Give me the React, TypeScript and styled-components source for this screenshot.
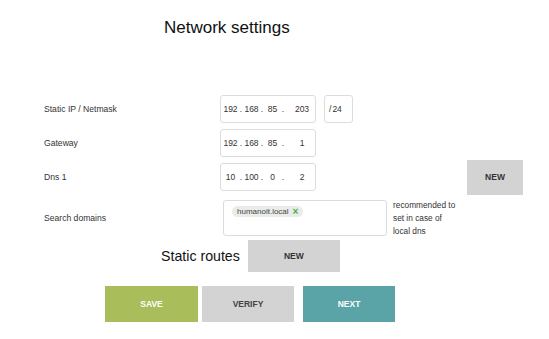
import React from 'react';
import styled, { createGlobalStyle } from 'styled-components';

const GlobalStyle = createGlobalStyle`
  body {
    margin: 0;
    background: #fff;
    font-family: "Liberation Sans", Arial, sans-serif;
    color: #333;
  }
`;

const Page = styled.div`
  width: 549px;
  padding-top: 18px;
`;

const Title = styled.h1`
  margin: 0;
  padding-left: 164px;
  font-size: 17px;
  line-height: 20px;
  font-weight: normal;
  color: #111;
`;

const Form = styled.div`
  margin-top: 57px;
  display: flex;
  flex-direction: column;
  gap: 6px;
`;

const Row = styled.div<{ $height?: number; $gap?: number }>`
  display: flex;
  align-items: center;
  padding-left: 44px;
  padding-right: 26px;
  height: ${({ $height }) => $height ?? 28}px;
  margin-top: ${({ $gap }) => $gap ?? 0}px;
`;

const Label = styled.span`
  width: 176px;
  flex-shrink: 0;
  font-size: 8.6px;
  color: #333;
`;

const Box = styled.div<{ $width: number }>`
  box-sizing: border-box;
  width: ${({ $width }) => $width}px;
  height: 100%;
  border: 1px solid #dcdcdc;
  border-radius: 3px;
  display: flex;
  align-items: center;
  font-size: 8.5px;
  color: #333;
`;

const IpBox = styled(Box)`
  padding-left: 2px;
`;

const Octet = styled.span<{ $last?: boolean }>`
  width: ${({ $last }) => ($last ? 20 : 15)}px;
  margin-left: ${({ $last }) => ($last ? 6 : 0)}px;
  text-align: center;
`;

const Dot = styled.span`
  width: 6px;
  text-align: center;
`;

const MaskBox = styled(Box)`
  margin-left: 8px;
  padding-left: 4px;
`;

const Slash = styled.span`
  margin-right: 1px;
`;

const SearchBox = styled(Box)`
  margin-left: 3px;
  align-items: flex-start;
  padding: 5px 8px;
`;

const Chip = styled.span`
  display: inline-flex;
  align-items: center;
  gap: 4px;
  height: 11px;
  padding: 0 5px;
  border-radius: 6px;
  background: #eaece9;
  font-size: 8px;
  color: #444;
`;

const ChipClose = styled.span`
  color: #4cae4c;
  font-size: 10px;
  font-weight: bold;
  line-height: 1;
`;

const Note = styled.span`
  align-self: flex-start;
  margin-top: -1.5px;
  margin-left: 6px;
  width: 68px;
  font-size: 8.3px;
  line-height: 13px;
  color: #333;
`;

const Button = styled.button<{ $bg: string; $fg: string; $w: number; $h: number }>`
  box-sizing: border-box;
  width: ${({ $w }) => $w}px;
  height: ${({ $h }) => $h}px;
  flex-shrink: 0;
  border: none;
  border-radius: 0;
  padding: 0;
  background: ${({ $bg }) => $bg};
  color: ${({ $fg }) => $fg};
  font-family: "Liberation Sans", Arial, sans-serif;
  font-size: 8.5px;
  font-weight: bold;
  cursor: pointer;
`;

const SideButton = styled(Button)`
  margin: -3.5px 0 -3.5px auto;
`;

const RoutesRow = styled.div`
  display: flex;
  align-items: center;
  gap: 8px;
  padding-left: 161px;
  margin-top: 4px;
`;

const RoutesTitle = styled.span`
  font-size: 14.2px;
  color: #111;
`;

const Actions = styled.div`
  display: flex;
  padding-left: 105px;
  margin-top: 14px;
`;

const ActionButton = styled(Button)<{ $ml?: number }>`
  margin-left: ${({ $ml }) => $ml ?? 0}px;
`;

const Ip: React.FC<{ parts: string[] }> = ({ parts }) => (
  <IpBox $width={96}>
    {parts.map((p, i) => (
      <React.Fragment key={i}>
        {i > 0 && <Dot>.</Dot>}
        <Octet $last={i === 3}>{p}</Octet>
      </React.Fragment>
    ))}
  </IpBox>
);

const App: React.FC = () => (
  <>
    <GlobalStyle />
    <Page>
      <Title>Network settings</Title>

      <Form>
        <Row>
          <Label>Static IP / Netmask</Label>
          <Ip parts={['192', '168', '85', '203']} />
          <MaskBox $width={29}>
            <Slash>/</Slash>24
          </MaskBox>
        </Row>
        <Row>
          <Label>Gateway</Label>
          <Ip parts={['192', '168', '85', '1']} />
        </Row>
        <Row>
          <Label>Dns 1</Label>
          <Ip parts={['10', '100', '0', '2']} />
          <SideButton $bg="#d3d3d3" $fg="#333" $w={56} $h={35}>NEW</SideButton>
        </Row>
        <Row $height={36} $gap={3}>
          <Label>Search domains</Label>
          <SearchBox $width={164}>
            <Chip>
              humanoit.local
              <ChipClose>×</ChipClose>
            </Chip>
          </SearchBox>
          <Note>recommended to set in case of local dns</Note>
        </Row>
      </Form>

      <RoutesRow>
        <RoutesTitle>Static routes</RoutesTitle>
        <Button $bg="#d3d3d3" $fg="#333" $w={92} $h={32}>NEW</Button>
      </RoutesRow>

      <Actions>
        <ActionButton $bg="#a9bd5b" $fg="#fff" $w={93} $h={36}>SAVE</ActionButton>
        <ActionButton $bg="#d3d3d3" $fg="#444" $w={92} $h={36} $ml={4}>VERIFY</ActionButton>
        <ActionButton $bg="#5aa3a7" $fg="#fff" $w={92} $h={36} $ml={9}>NEXT</ActionButton>
      </Actions>
    </Page>
  </>
);

export default App;
